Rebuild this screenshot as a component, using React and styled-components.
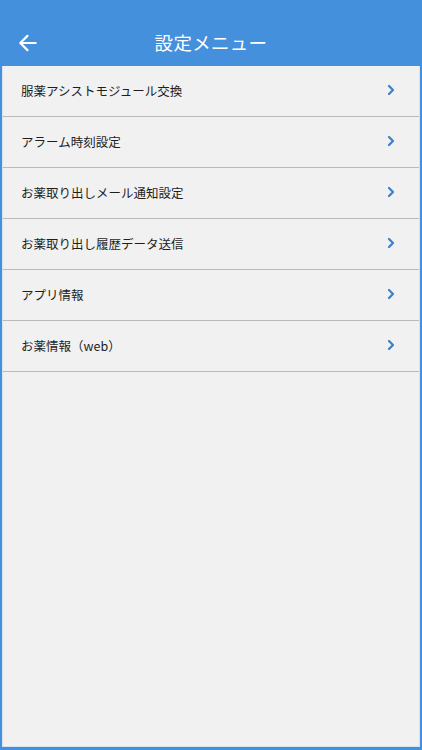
import React from "react";
import styled, { createGlobalStyle } from "styled-components";

const GlobalStyle = createGlobalStyle`
  html, body {
    margin: 0;
    padding: 0;
    background: #4490dc;
  }
  body {
    font-family: "Noto Sans CJK JP", "Noto Sans", sans-serif;
  }
`;

const Screen = styled.div`
  width: 422px;
  height: 750px;
  box-sizing: border-box;
  display: flex;
  flex-direction: column;
  background: #4490dc;
  padding: 0 2px 3px 2px;
`;

const Header = styled.header`
  height: 66px;
  flex-shrink: 0;
  position: relative;
  display: flex;
  align-items: flex-end;
  justify-content: center;
  padding-bottom: 12px;
  box-sizing: border-box;
`;

const BackButton = styled.button`
  position: absolute;
  left: 14px;
  bottom: 11px;
  width: 24px;
  height: 24px;
  padding: 0;
  border: none;
  background: none;
  display: flex;
  align-items: center;
  justify-content: center;
`;

const Title = styled.h1`
  margin: 0;
  color: #ffffff;
  font-size: 18.5px;
  font-weight: 400;
  letter-spacing: 0.3px;
  line-height: 24px;
`;

const Content = styled.main`
  flex: 1;
  background: #f1f1f1;
  border: 1px solid #d8e3ef;
  border-top: none;
`;

const Row = styled.div`
  height: 51px;
  display: flex;
  align-items: center;
  justify-content: space-between;
  padding: 0 23px 2px 18px;
  box-sizing: border-box;
  border-bottom: 1px solid #b9b9b9;
`;

const Label = styled.span`
  font-size: 12.5px;
  color: #1e1e1e;
  letter-spacing: 0;
`;

const Chevron = () => (
  <svg width="10" height="12" viewBox="0 0 10 12">
    <path d="M3 2 L7 6 L3 10" fill="none" stroke="#3a7fc9" strokeWidth="2.2" strokeLinecap="round" strokeLinejoin="round" />
  </svg>
);

const BackArrow = () => (
  <svg width="22" height="22" viewBox="0 0 20 20">
    <path d="M17 10 H3.5 M9.5 3.5 L3 10 L9.5 16.5" fill="none" stroke="#ffffff" strokeWidth="2" strokeLinecap="round" strokeLinejoin="round" />
  </svg>
);

const items = [
  "服薬アシストモジュール交換",
  "アラーム時刻設定",
  "お薬取り出しメール通知設定",
  "お薬取り出し履歴データ送信",
  "アプリ情報",
  "お薬情報（web）",
];

export default function App() {
  return (
    <>
      <GlobalStyle />
      <Screen>
        <Header>
          <BackButton aria-label="back">
            <BackArrow />
          </BackButton>
          <Title>設定メニュー</Title>
        </Header>
        <Content>
          {items.map((item) => (
            <Row key={item}>
              <Label>{item}</Label>
              <Chevron />
            </Row>
          ))}
        </Content>
      </Screen>
    </>
  );
}
